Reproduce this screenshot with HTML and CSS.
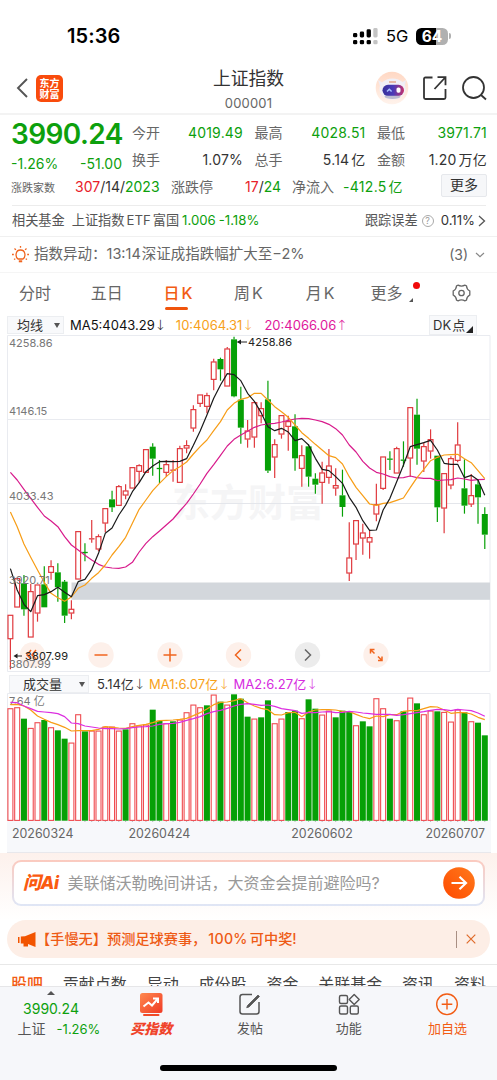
FILE: index.html
```html
<!DOCTYPE html>
<html lang="zh-CN">
<head>
  <meta charset="UTF-8">
  <meta name="viewport" content="width=device-width, initial-scale=1.0">
  <title>上证指数 000001</title>
  <link rel="stylesheet" href="styles.css">
</head>
<body>

  <div class="status-bar">
    <span class="clock">15:36</span>
    <div class="status-right">
      <svg width="25" height="17" viewBox="0 0 25 17">
        <g fill="#000">
          <rect x="0" y="5" width="4.3" height="4.3" rx="1.4"/>
          <rect x="0" y="12" width="4.3" height="4.3" rx="1.4"/>
          <rect x="6.8" y="3.5" width="4.3" height="6" rx="1.4"/>
          <rect x="6.8" y="12" width="4.3" height="4.3" rx="1.4"/>
          <rect x="13.6" y="1.3" width="4.3" height="8.2" rx="1.4"/>
          <rect x="13.6" y="12" width="4.3" height="4.3" rx="1.4"/>
        </g>
        <g fill="#c4c4c4">
          <rect x="20.3" y="0" width="4.3" height="9.5" rx="1.4"/>
          <rect x="20.3" y="12" width="4.3" height="4.3" rx="1.4"/>
        </g>
      </svg>
      <span class="network">5G</span>
      <span class="battery">64</span><span class="battery-cap"></span>
    </div>
  </div>

  <header class="header">
    <svg class="back" width="12" height="20" viewBox="0 0 12 20"><path d="M11 1 2 10l9 9" fill="none" stroke="#555" stroke-width="1.9"/></svg>
    <div class="app-logo"><span>东方</span><span>财富</span></div>
    <div class="title">
      <h1>上证指数</h1>
      <p>000001</p>
    </div>
    <svg class="robot" width="34" height="34" viewBox="0 0 34 34">
      <defs>
        <linearGradient id="visor" x1="0" x2="1"><stop offset="0" stop-color="#37309a"/><stop offset=".5" stop-color="#4a3bb8"/><stop offset="1" stop-color="#c4306c"/></linearGradient>
        <linearGradient id="halo" x1="0" y1="0" x2="0" y2="1"><stop offset="0" stop-color="#ffd8c4"/><stop offset="1" stop-color="#fff3ec"/></linearGradient>
      </defs>
      <circle cx="17" cy="17" r="16.3" fill="url(#halo)"/>
      <path d="M3 9l5 3-2 6zM31 9l-5 3 3 6z" fill="#eeedf5"/>
      <ellipse cx="17.500" cy="18" rx="13" ry="10.5" fill="#f1f0f7"/>
      <ellipse cx="17.500" cy="25.500" rx="8" ry="2.500" fill="#bdbcd0"/>
      <path d="M14 11h7" fill="none" stroke="#e2a184" stroke-width="1.400"/>
      <rect x="7.500" y="13.800" width="21.500" height="11" rx="5.500" fill="url(#visor)"/>
      <path d="M12 20.5l2.3-2.3 2.3 2.3" fill="none" stroke="#a8c0ff" stroke-width="1.5"/>
      <rect x="21.500" y="16.5" width="4" height="5.2" rx="1.6" fill="#fff"/>
    </svg>
    <svg class="share" width="24" height="24" viewBox="0 0 24 24" fill="none" stroke="#333" stroke-width="1.8">
      <path d="M9.500 1.500H2.500Q1 1.500 1 3v18.500Q1 23 2.500 23h18.500q1.500 0 1.500-1.500V13"/><path d="M14.500 1.200h8v8M22.200 1.500 11.500 13"/>
    </svg>
    <svg class="search" width="25" height="25" viewBox="0 0 25 25" fill="none" stroke="#333" stroke-width="1.8">
      <circle cx="11.500" cy="11.500" r="10.500"/><path d="M19 19l5 4.500"/>
    </svg>
  </header>

  <section class="quote">
    <div class="price-block">
      <strong class="price">3990.24</strong>
      <div class="change"><span>-1.26%</span><span>-51.00</span></div>
    </div>
    <dl class="stats">
      <div><dt>今开</dt><dd class="down">4019.49</dd></div>
      <div><dt>最高</dt><dd class="down">4028.51</dd></div>
      <div><dt>最低</dt><dd class="down">3971.71</dd></div>
      <div><dt>换手</dt><dd>1.07%</dd></div>
      <div><dt>总手</dt><dd>5.14<i>亿</i></dd></div>
      <div><dt>金额</dt><dd>1.20<i>万亿</i></dd></div>
    </dl>
  </section>
  <section class="breadth">
    <span class="small-label">涨跌家数</span>
    <span class="counts"><b class="up">307</b>/14/<b class="down">2023</b></span>
    <span class="label">涨跌停</span>
    <span class="limits"><b class="up">17</b>/<b class="down">24</b></span>
    <span class="label">净流入</span>
    <span class="inflow">-412.5<i>亿</i></span>
    <button class="more-btn">更多</button>
  </section>

  <section class="fund">
    <span>相关基金</span>
    <span class="fund-name">上证指数<i>ETF</i>富国</span>
    <span class="fund-value">1.006</span>
    <span class="fund-value fund-change">-1.18%</span>
    <span class="track">跟踪误差</span>
    <span class="help">?</span>
    <span class="track-value">0.11%</span>
    <svg width="8" height="12" viewBox="0 0 8 12"><path d="M1 1l5.500 5L1 11" fill="none" stroke="#555" stroke-width="1.300"/></svg>
  </section>

  <section class="alert">
    <svg width="17" height="18" viewBox="0 0 17 18" fill="none" stroke="#f0641e" stroke-width="1.300">
      <path d="M6 13C3 11 3.200 4 8.500 4s5.500 7 2.500 9z"/><path d="M6.800 15.300h3.400" stroke-width="2"/>
      <path d="M8.500 0v1.800M2.500 2.500l1.400 1.400M14.500 2.500l-1.400 1.400M0 8.500h1.800M15.200 8.500H17M2 13.500l1.300-.8M15 13.500l-1.300-.8"/>
    </svg>
    <span class="alert-text">指数异动：<i class="time">13:14</i>深证成指跌幅扩大至<i>−2%</i></span>
    <span class="alert-count">(3)</span>
    <svg width="10" height="6" viewBox="0 0 10 6"><path d="M1 1l4 3.600L9 1" fill="none" stroke="#888" stroke-width="1.200"/></svg>
  </section>

  <nav class="period-tabs">
    <a>分时</a>
    <a>五日</a>
    <a class="active">日<i>K</i></a>
    <a>周<i>K</i></a>
    <a>月<i>K</i></a>
    <a class="more">更多</a>
    <svg width="19" height="18" viewBox="0 0 19 18" fill="none" stroke="#666" stroke-width="1.300">
      <path d="M6 1.200Q9.500 3 13 1.200L14.500 2q.2 3.300 3.300 5v4q-3.100 1.700-3.300 5l-1.500.8Q9.500 15 6 16.800L4.500 16q-.2-3.300-3.300-5V7q3.100-1.700 3.300-5z"/><circle cx="9.500" cy="9" r="2.700"/>
    </svg>
  </nav>

  <div class="legend">
    <span class="select">均线</span>
    <span class="ma-black">MA5:4043.29<em>↓</em></span>
    <span class="ma-orange">10:4064.31<em>↓</em></span>
    <span class="ma-pink">20:4066.06<em>↑</em></span>
    <span class="dk">DK<i>点</i></span>
  </div>
  <svg id="price-chart" class="chart" width="497" height="338" viewBox="0 0 497 338"></svg>

  <div class="legend volume-legend">
    <span class="select">成交量</span>
    <span class="vol-now">5.14亿<em>↓</em></span>
    <span class="ma-orange vol-ma">MA1:6.07亿<em>↓</em></span>
    <span class="ma-violet vol-ma">MA2:6.27亿<em>↓</em></span>
  </div>
  <svg id="volume-chart" class="chart" width="497" height="129" viewBox="0 0 497 129"></svg>
  <div class="dates">
    <span>20260324</span><span>20260424</span><span>20260602</span><span>20260707</span>
  </div>

  <section class="ask">
    <div class="ask-box">
      <span class="ask-logo">问Ai</span>
      <span class="ask-text">美联储沃勒晚间讲话，大资金会提前避险吗?</span>
      <svg width="32" height="32" viewBox="0 0 32 32">
        <defs><linearGradient id="go" x1="0" y1="1" x2="1" y2="0"><stop offset="0" stop-color="#ff4a00"/><stop offset="1" stop-color="#ff7a1c"/></linearGradient></defs>
        <circle cx="16" cy="16" r="15.800" fill="url(#go)"/>
        <path d="M8.500 16h14.500M16.500 9.800l6.500 6.200-6.500 6.200" fill="none" stroke="#fff" stroke-width="2.200"/>
      </svg>
    </div>
  </section>

  <section class="promo">
    <svg width="18" height="15" viewBox="0 0 18 15" fill="#f25400"><path d="M0 5h1.500v6H0zM2.800 4.500 7 4.200 17.500 0v15L10 12v2.500H5.500V11.500H2.800z"/></svg>
    <span class="promo-text">【手慢无】预测足球赛事，<i>100%</i>可中奖!</span>
    <span class="promo-line"></span>
    <svg width="10" height="10" viewBox="0 0 10 10"><path d="M.7.700l8.600 8.600M9.300.700.700 9.300" stroke="#e06a2a" stroke-width="1.200"/></svg>
  </section>

  <nav class="info-tabs">
    <a class="active">股吧</a><a>贡献点数</a><a>异动</a><a>成份股</a><a>资金</a><a>关联基金</a><a>资讯</a><a>资料</a>
  </nav>

  <footer class="bottom-bar">
    <div class="index-brief">
      <span class="caret"></span>
      <span class="down brief-price">3990.24</span>
      <span class="brief-row">上证<b class="down">-1.26%</b></span>
    </div>
    <div class="action buy">
      <svg width="24" height="24" viewBox="0 0 24 24">
        <defs><linearGradient id="buy" x1="0" y1="0" x2="1" y2="1"><stop offset="0" stop-color="#ff8a50"/><stop offset="1" stop-color="#f03a24"/></linearGradient></defs>
        <rect x="1" y="0" width="22.500" height="20" rx="2.500" fill="url(#buy)"/>
        <path d="M4.500 13.500l5-4 3.500 3 5.500-6.500M14 5.500h5v4.500" fill="none" stroke="#fff" stroke-width="2"/>
        <rect x="4" y="21" width="16.500" height="2" rx="1" fill="#f04a28"/>
      </svg>
      <span>买指数</span>
    </div>
    <div class="action">
      <svg width="24" height="24" viewBox="0 0 24 24" fill="none" stroke="#555" stroke-width="1.500">
        <path d="M14 1.500H4.500Q2 1.500 2 4v14.500Q2 21 4.500 21h14q2.500 0 2.500-2.500V9"/><path d="M9.500 12.500 20 2l1.500 1.500L11 14l-2.300.7z" fill="#555" stroke-width=".8"/>
      </svg>
      <span>发帖</span>
    </div>
    <div class="action">
      <svg width="24" height="24" viewBox="0 0 24 24" fill="none" stroke="#555" stroke-width="1.400">
        <rect x="2.500" y="2.500" width="8" height="8" rx="1.500"/><rect x="2.500" y="13" width="8" height="8" rx="1.500"/><rect x="13.300" y="13" width="8" height="8" rx="1.500"/><path d="M17.200 1.500l5 5-5 5-5-5z" stroke-linejoin="round"/>
      </svg>
      <span>功能</span>
    </div>
    <div class="action add">
      <svg width="24" height="24" viewBox="0 0 24 24" fill="none" stroke="#f25c14" stroke-width="1.400">
        <circle cx="12" cy="11.300" r="10.300"/><path d="M12 6v10.600M6.700 11.300h10.600"/>
      </svg>
      <span>加自选</span>
    </div>
    <div class="home-indicator"></div>
  </footer>

  <script src="chart.js"></script>
</body>
</html>
```
FILE: styles.css
```css
* {
  box-sizing: border-box;
}
body {
  margin: 0;
  width: 497px;
  height: 1080px;
  overflow: hidden;
  background: #fff;
  color: #333;
  font-family: Inter, "Noto Sans CJK SC", sans-serif;
  font-size: 14px;
  line-height: 1;
}
i, em, b {
  font-style: normal;
  font-weight: inherit;
}
a, span {
  white-space: nowrap;
}
svg {
  display: block;
  flex: none;
}
.up {
  color: #e8202a;
}
.down {
  color: #0da00d;
}

/* status bar */
.status-bar {
  display: flex;
  justify-content: space-between;
  align-items: center;
  height: 60px;
  padding: 12px 46px 0 67px;
  color: #000;
}
.clock {
  font-size: 20px;
  font-weight: 600;
  letter-spacing: 0.1px;
}
.status-right {
  display: flex;
  align-items: center;
}
.network {
  margin: 0 8px 0 8px;
  font-size: 16.5px;
  letter-spacing: -0.2px;
}
.battery {
  width: 32px;
  height: 17px;
  border-radius: 5.5px;
  background: linear-gradient(90deg, #000 64%, #b0b0b0 64%);
  color: #fff;
  font-size: 15.5px;
  font-weight: 700;
  line-height: 17px;
  text-align: center;
}
.battery-cap {
  width: 2px;
  height: 6px;
  margin-left: 1px;
  border-radius: 0 2px 2px 0;
  background: #b0b0b0;
}

/* header */
.header {
  position: relative;
  display: flex;
  align-items: center;
  height: 55px;
  padding: 3px 10px 0 16px;
  border-bottom: 2px solid #f3f3f3;
}
.app-logo {
  display: flex;
  flex-direction: column;
  align-items: center;
  justify-content: center;
  width: 27px;
  height: 27px;
  margin: 0 auto 0 8px;
  border-radius: 5px;
  background: #f94b0c;
  color: #fff;
  font-family: "Noto Sans CJK SC", sans-serif;
  font-size: 10px;
  font-weight: 700;
  line-height: 11px;
}
.title {
  position: absolute;
  top: 10px;
  left: 0;
  width: 100%;
  text-align: center;
}
.title h1 {
  margin: 0;
  font-size: 17.8px;
  font-weight: 400;
  line-height: 18px;
}
.title p {
  margin: 8px 0 0;
  color: #666;
  font-size: 13px;
  line-height: 14px;
  letter-spacing: 0.2px;
}
.share {
  margin: 0 15px 0 14px;
}

/* quote */
.quote {
  display: flex;
  height: 57px;
  padding: 5px 10px 0 11px;
}
.price-block {
  width: 111px;
  margin-right: 10px;
}
.price {
  display: block;
  color: #0da00d;
  font-size: 28px;
  font-weight: 600;
  line-height: 28px;
  letter-spacing: -0.6px;
}
.change {
  display: flex;
  justify-content: space-between;
  margin-top: 9px;
  color: #0da00d;
  font-size: 14px;
}
.stats {
  flex: 1;
  display: grid;
  grid-template-columns: 111px 111px 110px;
  grid-auto-rows: 27px;
  column-gap: 11.5px;
  margin: -1px 0 0;
}
.stats div {
  display: flex;
  justify-content: space-between;
  align-items: center;
}
dt, .label {
  color: #666;
}
dd {
  margin: 0;
  letter-spacing: 0.2px;
}
dd i, .inflow i {
  margin-left: 2px;
}
.breadth {
  display: flex;
  align-items: center;
  height: 34px;
  margin: 0 11px 0 12px;
  padding-bottom: 4px;
  border-bottom: 1px solid #ececec;
}
.small-label {
  margin: 4px 20px 0 -1px;
  color: #666;
  font-size: 11px;
}
.counts {
  width: 96px;
}
.limits {
  width: 47px;
  margin-left: 32px;
}
.inflow {
  margin-left: 9px;
  color: #0da00d;
  letter-spacing: 0.3px;
}
.more-btn {
  width: 46px;
  height: 23px;
  margin: -3px -1px 0 auto;
  padding: 0;
  border: 1px solid #e6e8ec;
  border-radius: 2px;
  background: #f6f7f9;
  color: #333;
  font: inherit;
}

/* related fund */
.fund {
  display: flex;
  align-items: center;
  height: 31px;
  padding: 0 11px 0 12px;
  border-bottom: 1px solid #f0f0f0;
  color: #555;
  font-size: 13.2px;
}
.fund-name {
  margin: 0 3px 0 7px;
}
.fund-name i {
  margin: 0 2px;
}
.fund-value {
  color: #0da00d;
}
.fund-change {
  margin-left: 3px;
}
.track {
  margin-left: auto;
}
.help {
  width: 12px;
  height: 12px;
  margin: 0 7px 0 4px;
  border: 1px solid #aaa;
  border-radius: 50%;
  color: #999;
  font-size: 9px;
  line-height: 10px;
  text-align: center;
}
.track-value {
  margin-right: 3px;
  color: #333;
}

/* index alert */
.alert {
  display: flex;
  align-items: center;
  height: 36px;
  padding: 0 12px;
  border-bottom: 1px solid #f5f5f5;
  color: #666;
  font-size: 14.5px;
}
.alert-text {
  margin-left: 5px;
}
.alert-text .time {
  margin-right: 1px;
}
.alert-count {
  margin: 0 7px 0 auto;
  font-size: 14px;
}

/* period tabs */
.period-tabs {
  display: flex;
  align-items: center;
  height: 42px;
  padding: 0 26px 2px 19px;
  color: #666;
  font-size: 16px;
}
.period-tabs a {
  position: relative;
  width: 71.7px;
}
.period-tabs a i {
  margin-left: 2px;
}
.period-tabs .active {
  padding-left: 1px;
  color: #f25c14;
  font-weight: 500;
}
.period-tabs .active::after {
  content: "";
  position: absolute;
  left: 3px;
  bottom: -9px;
  width: 23px;
  height: 3px;
  border-radius: 2px;
  background: #f0540c;
}
.period-tabs svg {
  margin-left: auto;
}
.period-tabs .more {
  margin-left: -7px;
}
.period-tabs .more::before {
  content: "";
  position: absolute;
  left: 39px;
  bottom: -1px;
  border-left: 4px solid transparent;
  border-bottom: 4px solid #555;
}
.period-tabs .more::after {
  content: "";
  position: absolute;
  left: 43px;
  top: -3px;
  width: 7px;
  height: 7px;
  border-radius: 50%;
  background: #f00a0a;
}

/* chart legends */
.legend {
  display: flex;
  align-items: center;
  height: 20px;
  padding: 0 20px 0 7px;
  font-size: 13px;
}
.legend em {
  display: inline-block;
  width: 9px;
  margin-left: 1px;
  font-family: "DejaVu Sans Light", "DejaVu Sans", sans-serif;
  font-size: 14px;
  font-weight: 200;
  text-indent: -1px;
}
.select {
  position: relative;
  width: 57px;
  height: 18px;
  margin-right: 6px;
  padding-left: 9px;
  border: 1px solid #eceef1;
  background: #f8f9fb;
  font-size: 13px;
  line-height: 16px;
}
.select::after {
  content: "";
  position: absolute;
  right: 3px;
  top: 6px;
  border: 3px solid transparent;
  border-top: 5px solid #555;
  border-bottom: 0;
}
.ma-black {
  margin-right: 11px;
  color: #111;
}
.ma-orange {
  margin-right: 12px;
  color: #f7a11a;
}
.ma-pink {
  color: #e0189c;
}
.ma-violet {
  color: #d62ae0;
}
.dk {
  position: relative;
  width: 48px;
  height: 20px;
  margin-left: auto;
  padding-left: 3px;
  border: 1px solid #eceef1;
  background: #f8f9fb;
  line-height: 18px;
}
.dk i {
  margin-left: 1px;
}
.dk::after {
  content: "";
  position: absolute;
  right: 3px;
  bottom: 1px;
  border-left: 7px solid transparent;
  border-bottom: 7px solid #222;
}
.volume-legend {
  padding-top: 1px;
  padding-left: 9px;
}
.volume-legend .select {
  width: 80px;
  margin-right: 8px;
  padding-left: 13px;
}
.vol-now {
  margin-right: 5px;
}
.vol-ma {
  margin-right: 5px;
  letter-spacing: 0.1px;
}
.chart text {
  font-size: 11px;
}
.chart .watermark {
  font-size: 38px;
  font-weight: 700;
  fill: #f5f5f6;
}
.dates {
  display: flex;
  height: 31px;
  margin: 0 6px 0 7px;
  padding: 6px 0 0 5px;
  border-bottom: 1px solid #e8e8ec;
  background: #f7f8fb;
  color: #666;
  font-size: 12.4px;
}
.dates span:nth-child(2) {
  margin-left: 55px;
}
.dates span:nth-child(3) {
  margin-left: 101px;
}
.dates span:nth-child(4) {
  margin: 0 6px 0 auto;
}

/* ask box */
.ask {
  height: 67px;
  padding: 7px 12px 0;
  background: linear-gradient(#fdf1ec, #fff);
}
.ask-box {
  display: flex;
  align-items: center;
  height: 46px;
  padding: 0 8px 0 9px;
  border: 2px solid transparent;
  border-radius: 9px;
  background: linear-gradient(#fff, #fff) padding-box, linear-gradient(#fbcabf, #dfe6f6) border-box;
}
.ask-logo {
  margin-right: 9px;
  color: #fa5a10;
  font-size: 18px;
  font-style: italic;
  font-weight: 800;
  letter-spacing: -0.5px;
}
.ask-text {
  margin-right: auto;
  color: #999;
  font-size: 16px;
}

/* promo */
.promo {
  display: flex;
  align-items: center;
  height: 38px;
  margin: 0 7px;
  padding: 0 14px 0 11px;
  border-radius: 19px;
  background: #fdeee6;
  color: #ee5a14;
}
.promo-text {
  margin-right: auto;
  font-size: 14.2px;
  font-weight: 500;
}
.promo-text i {
  margin: 0 2px;
  letter-spacing: 0.3px;
}
.promo-line {
  width: 1px;
  height: 17px;
  margin-right: 9px;
  background: #a98f83;
}

/* info tabs, cut off by the bottom bar */
.info-tabs {
  display: flex;
  justify-content: space-between;
  height: 22px;
  margin-top: 6px;
  padding: 11px 11px 0;
  border-top: 1px solid #e8e8e8;
  overflow: hidden;
  color: #444;
  font-size: 16px;
}
.info-tabs .active {
  color: #f25c14;
  font-weight: 500;
}

/* bottom bar */
.bottom-bar {
  position: relative;
  display: flex;
  height: 94px;
  border-top: 1px solid #e6e6e8;
  background: #f6f7fa;
}
.index-brief {
  display: flex;
  flex-direction: column;
  align-items: center;
  width: 102px;
}
.caret {
  margin-top: 4px;
  border: 4px solid transparent;
  border-top: 0;
  border-bottom: 4px solid #555;
}
.brief-price {
  margin-top: 7px;
  font-size: 14px;
}
.brief-row {
  margin: 6px 0 0 16px;
  color: #555;
}
.brief-row b {
  margin-left: 11px;
  font-size: 13px;
}
.action {
  display: flex;
  flex-direction: column;
  align-items: center;
  width: 98.700px;
  padding-top: 6px;
  color: #555;
  font-size: 13px;
}
.action span {
  margin-top: 5px;
}
.buy span {
  color: #f0442a;
  font-size: 14px;
  font-style: italic;
  font-weight: 900;
}
.add {
  color: #f25c14;
}
.home-indicator {
  position: absolute;
  left: 160px;
  bottom: 9px;
  width: 177px;
  height: 6px;
  border-radius: 3px;
  background: #000;
}
```
FILE: chart.js
```js
const START = 10.4;
const STEP = 6.777;
const RED = "#e0393e";
const GREEN = "#06a006";

// [up/down, high, body top, body bottom, low], three units per pixel
const candles = [
  ["r", 855, 855, 927, 1018], ["r", 745, 745, 832, 832], ["g", 735, 760, 838, 857], ["r", 762, 784, 922, 922],
  ["r", 764, 764, 850, 875], ["g", 709, 763, 832, 832], ["r", 691, 709, 728, 749], ["g", 700, 727, 772, 815],
  ["g", 750, 755, 857, 879], ["r", 811, 837, 850, 868], ["r", 604, 604, 748, 748], ["g", 640, 666, 669, 694],
  ["r", 570, 625, 628, 638], ["r", 613, 619, 658, 664], ["r", 535, 535, 580, 607], ["g", 482, 508, 532, 546],
  ["r", 465, 469, 527, 527], ["r", 463, 482, 496, 508], ["r", 412, 412, 475, 475], ["r", 403, 406, 425, 458],
  ["r", 358, 358, 428, 428], ["g", 340, 350, 386, 437], ["g", 390, 414, 417, 459], ["r", 390, 403, 428, 440],
  ["r", 390, 419, 424, 455], ["r", 347, 355, 458, 458], ["r", 331, 346, 355, 370], ["r", 226, 238, 295, 305],
  ["r", 194, 194, 221, 231], ["r", 188, 196, 230, 250], ["r", 86, 95, 149, 181], ["g", 83, 87, 118, 152],
  ["r", 51, 56, 169, 169], ["g", 20, 28, 199, 202], ["g", 170, 209, 293, 341], ["r", 270, 302, 328, 353],
  ["r", 217, 217, 322, 353], ["r", 217, 235, 258, 280], ["g", 152, 208, 422, 429], ["r", 328, 343, 382, 444],
  ["r", 256, 256, 313, 326], ["r", 257, 274, 290, 362], ["g", 253, 289, 385, 422], ["r", 346, 376, 416, 470],
  ["g", 343, 349, 440, 470], ["g", 430, 446, 464, 491], ["r", 395, 428, 458, 521], ["r", 357, 407, 443, 461],
  ["r", 415, 466, 475, 497], ["g", 419, 496, 531, 560], ["r", 577, 683, 730, 753], ["r", 571, 571, 643, 690],
  ["r", 581, 608, 625, 674], ["r", 602, 622, 637, 686], ["r", 461, 523, 553, 574], ["r", 380, 380, 476, 480],
  ["g", 364, 386, 389, 420], ["r", 350, 355, 430, 430], ["g", 334, 389, 392, 410], ["r", 232, 232, 385, 440],
  ["g", 206, 254, 356, 404], ["r", 337, 349, 394, 426], ["r", 298, 328, 364, 386], ["g", 377, 377, 532, 576],
  ["r", 430, 430, 535, 610], ["r", 379, 385, 466, 478], ["r", 277, 344, 392, 397], ["g", 388, 475, 527, 551],
  ["r", 432, 496, 523, 531], ["g", 450, 463, 502, 581], ["g", 532, 552, 614, 657]
];

const ma5 = [716, 780, 823, 845, 797, 794, 785, 772, 787, 800, 755, 748, 718, 670, 610, 594, 555, 525, 485, 458, 425, 408, 395, 394, 395, 394, 386, 346, 303, 255, 205, 165, 131, 134, 152, 190, 214, 248, 290, 302, 295, 306, 332, 326, 345, 385, 418, 422, 440, 460, 502, 532, 572, 601, 600, 540, 505, 455, 405, 350, 344, 338, 331, 360, 400, 403, 403, 443, 436, 450, 496];
const ma10 = [546, 590, 642, 682, 720, 757, 790, 803, 814, 801, 775, 765, 745, 728, 705, 675, 650, 622, 580, 538, 510, 482, 460, 440, 422, 410, 396, 372, 350, 330, 302, 275, 240, 220, 208, 203, 190, 190, 210, 230, 245, 262, 285, 308, 325, 343, 360, 377, 383, 402, 440, 472, 497, 522, 526, 520, 518, 511, 504, 473, 443, 418, 392, 382, 375, 374, 373, 386, 398, 422, 446];
const ma20 = [427, 450, 478, 505, 532, 558, 573, 590, 620, 645, 660, 676, 690, 703, 711, 714, 715, 711, 697, 666, 640, 620, 603, 585, 567, 543, 520, 492, 462, 430, 404, 376, 348, 328, 315, 304, 292, 285, 282, 280, 276, 271, 267, 265, 266, 270, 275, 283, 296, 315, 345, 366, 394, 414, 427, 432, 440, 444, 443, 438, 443, 445, 445, 452, 450, 449, 444, 447, 451, 449, 448];

const volumes = [115, 112, 146, 174, 157, 150, 172, 181, 206, 218, 133, 184, 182, 182, 170, 170, 182, 178, 160, 167, 164, 119, 152, 160, 154, 149, 127, 104, 112, 106, 74, 95, 104, 73, 86, 140, 146, 142, 91, 160, 146, 126, 122, 145, 88, 116, 134, 122, 142, 122, 124, 166, 154, 169, 85, 115, 146, 151, 124, 83, 100, 133, 122, 124, 126, 155, 119, 127, 154, 158, 196];
const volumeColors = "rrgrrgrggr" + "rgrrrrrgrr" + "rggrgrrrrg" + "rgrgggrggr" + "rggrggrrgg" + "grggrrgrgr" + "grrgrrrgrg" + "g";
const volMa1 = [104, 103, 108, 120, 138, 148, 157, 164, 172, 183, 182, 182, 182, 178, 170, 172, 174, 175, 170, 166, 163, 158, 152, 151, 150, 148, 145, 137, 128, 117, 104, 97, 96, 92, 86, 98, 108, 115, 119, 134, 135, 128, 127, 140, 126, 120, 119, 119, 120, 124, 125, 133, 141, 146, 138, 140, 134, 134, 124, 122, 122, 116, 110, 111, 120, 130, 128, 128, 132, 142, 149];
const volMa2 = [97, 98, 108, 116, 124, 126, 128, 131, 140, 159, 161, 168, 171, 174, 176, 176, 177, 176, 173, 171, 170, 168, 163, 161, 160, 157, 151, 146, 140, 131, 125, 121, 115, 108, 103, 101, 103, 106, 105, 109, 116, 119, 122, 130, 128, 128, 126, 125, 128, 127, 124, 126, 129, 131, 133, 133, 133, 136, 134, 131, 128, 125, 121, 118, 119, 122, 118, 120, 122, 129, 139];

const x = i => +(START + i * STEP).toFixed(2);
const priceY = v => +(v / 3 - 5).toFixed(2);
const volY = v => +(v / 3 - 23).toFixed(2);

function line(values, y, color) {
  const points = values.map((v, i) => `${x(i)},${y(v)}`).join(" ");
  return `<polyline points="${points}" fill="none" stroke="${color}" stroke-width="1.2" stroke-linejoin="round"/>`;
}

function candle([type, high, top, bottom, low], i) {
  const cx = x(i);
  const color = type === "r" ? RED : GREEN;
  const wick = (a, b) => b > a ? `<path d="M${cx} ${priceY(a)}V${priceY(b)}" stroke="${color}" stroke-width="1.2"/>` : "";
  const h = (bottom - top) / 3;
  const body = h < 2
    ? `<path d="M${cx - 2.8} ${priceY(top) + .5}h5.600" stroke="${color}" stroke-width="1.300"/>`
    : type === "g"
      ? `<rect x="${cx - 3}" y="${priceY(top)}" width="6" height="${h}" fill="${GREEN}"/>`
      : `<rect x="${cx - 2.4}" y="${priceY(top) + .3}" width="4.800" height="${h - .6}" fill="#fff" stroke="${RED}" stroke-width="1.200"/>`;
  return wick(high, top) + wick(bottom, low) + body;
}

function roundButton(cx, icon, color = "#f0641e", bg = "#fdf0ea") {
  return `<g transform="translate(${cx} 320)"><circle r="12.700" fill="${bg}"/><path d="${icon}" fill="none" stroke="${color}" stroke-width="1.500"/></g>`;
}

// small ticks under every bar, longer ones at the labelled dates
const ticks = volumes.map((v, i) => i < 11 ? "" : `M${x(i)} 128v${[22, 46, 70].includes(i) ? 5 : 2}`).join("");

document.getElementById("price-chart").innerHTML = `
  <path d="M7.500 .5H490V336.500H7.500zM7.500 84.500H490" fill="none" stroke="#e9ebf0"/>
  <text x="172" y="181" class="watermark">东方财富</text>
  <path d="M7.500 168.500H490" stroke="#e4e6eb"/>
  <rect x="71.500" y="247.500" width="418.500" height="17.300" fill="#d3d7dc"/>
  ${candles.map(candle).join("")}
  ${line(ma20, priceY, "#d81b8c")}
  ${line(ma10, priceY, "#f79d16")}
  ${line(ma5, priceY, "#1a1a1a")}
  <g fill="#777">
    <text x="9" y="12">4258.86</text>
    <text x="9" y="80">4146.15</text>
    <text x="9" y="164.500">4033.43</text>
    <text x="9" y="248.500">3920.71</text>
  </g>
  ${roundButton(32.500, "M-1.500-5-5.500 0-1.500 4M3.500-5-.5 0 3.500 4")}
  ${roundButton(101, "M-6.500 0H6.500")}
  ${roundButton(170, "M-6.500 0H6.500M0-6.500V6.500")}
  ${roundButton(238.500, "M2.500-5.500-3 0 2.500 5.500")}
  ${roundButton(307.500, "M-2.500-5.500 3 0-2.500 5.500", "#666", "#ececec")}
  ${roundButton(376, "M-5.500-1.500V-5.500H-1.500M-5.500-5.500-1.500-1.500M6 1.500V5.500H2M6 5.500 2 1.500")}
  <text x="9" y="332.500" fill="#777">3807.99</text>
  <g fill="#222">
    <path d="M15 321H22M237.500 7H247" stroke="#222"/>
    <path d="M13.500 321l4-2.500v5zM237 7l4-2.500v5z"/>
    <text x="25" y="325" textLength="43">3807.99</text>
    <text x="248" y="11" textLength="44">4258.86</text>
  </g>`;

document.getElementById("volume-chart").innerHTML = `
  <rect x="7" y="127.500" width="484" height="2" fill="#f7f8fb"/>
  <path d="M7.500 128V.5H490V128" fill="none" stroke="#e9ebf0"/>
  <path class="ticks" d="${ticks}" stroke="#b5b7bb"/>
  <text x="9" y="12" fill="#777">7.64 亿</text>
  ${volumes.map((v, i) => volumeColors[i] === "g"
    ? `<rect x="${x(i) - 3}" y="${volY(v)}" width="6" height="${127.7 - volY(v)}" fill="${GREEN}"/>`
    : `<rect x="${x(i) - 2.5}" y="${volY(v) + .4}" width="5" height="${127 - volY(v)}" fill="#fff" stroke="#ef4b50" stroke-width="1.1"/>`).join("")}
  ${line(volMa1, volY, "#f79d16")}
  ${line(volMa2, volY, "#dc2ee0")}`;
```
